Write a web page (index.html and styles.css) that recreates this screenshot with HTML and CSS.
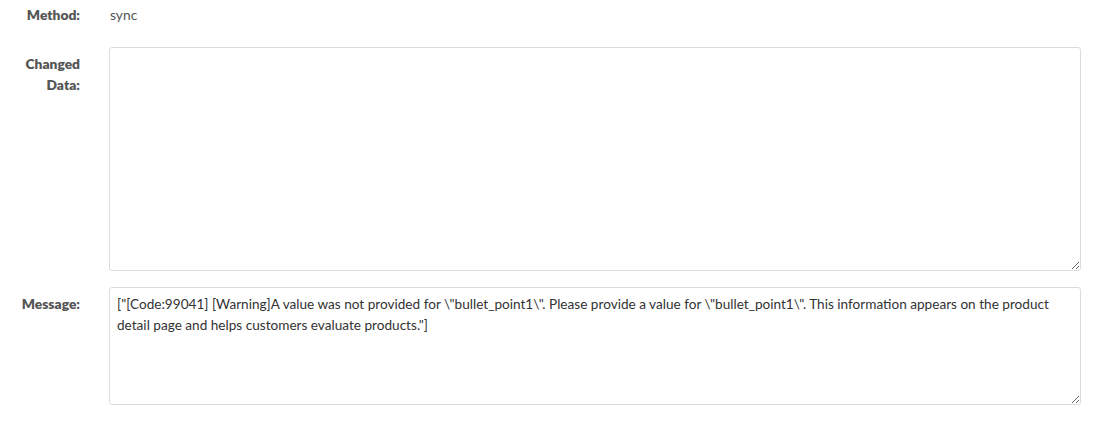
FILE: index.html
```html
<!DOCTYPE html>
<html>
<head>
<meta charset="utf-8">
<link rel="stylesheet" href="styles.css">
</head>
<body>
<div class="form">
  <div class="row row-static">
    <div class="label">Method:</div>
    <div class="value">sync</div>
  </div>
  <div class="row">
    <div class="label">Changed<br>Data:</div>
    <div class="field"><textarea class="ta ta-big"></textarea></div>
  </div>
  <div class="row">
    <div class="label">Message:</div>
    <div class="field"><textarea class="ta ta-small">["[Code:99041] [Warning]A value was not provided for \"bullet_point1\". Please provide a value for \"bullet_point1\". This information appears on the product detail page and helps customers evaluate products."]</textarea></div>
  </div>
</div>
</body>
</html>
```
FILE: styles.css
```css
html, body { margin: 0; padding: 0; background: #fff; }
body { font-family: Lato, "Noto Sans", sans-serif; font-size: 13.8px; color: #555; }
.form { display: flex; flex-direction: column; gap: 17px; padding-right: 22px; }
.row { display: grid; grid-template-columns: 80px 1fr; column-gap: 29px; }
.row-static { padding-top: 4px; margin-bottom: 7px; height: 19px; }
.label { text-align: right; font-weight: 800; line-height: 21px; padding-top: 6px; color: #555; }
.row-static .label { padding-top: 0; }
.value { line-height: 21px; color: #555; }
.row-static .value { padding-left: 1px; }
.field { display: flex; }
.ta { box-sizing: border-box; width: 100%; border: 1px solid #d8dde3; border-radius: 3px; padding: 6px 7px; font-family: Lato, "Noto Sans", sans-serif; font-size: 13.6px; line-height: 21px; color: #333; resize: vertical; outline: none; margin: 0; }
.ta-big { height: 224px; }
.ta-small { height: 118px; }
.form > .row:nth-child(3) { margin-top: -1px; }
```
